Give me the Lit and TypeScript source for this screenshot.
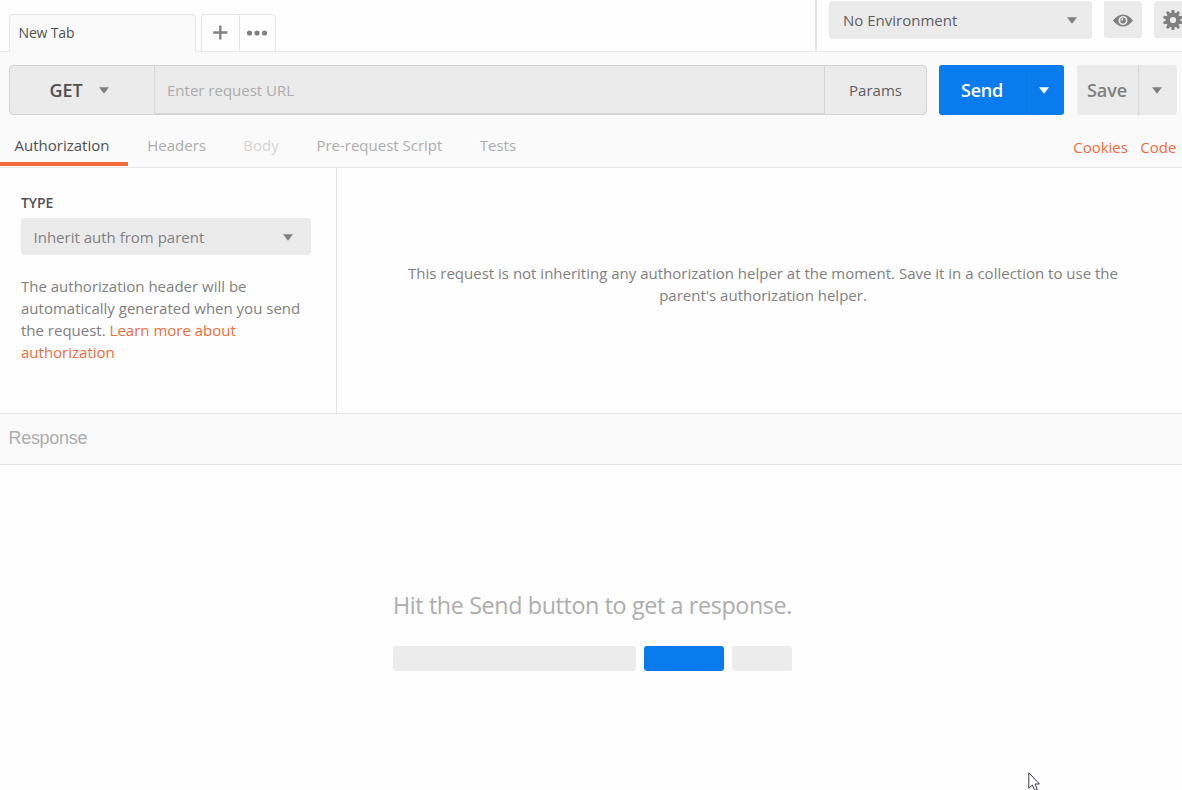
import { LitElement, html, css, svg } from "lit";
import { customElement } from "lit/decorators.js";

const TEETH = Array.from({ length: 10 }, (_, i) => i * 36);

@customElement("app-root")
export class AppRoot extends LitElement {
  static styles = css`
    :host {
      display: flex;
      flex-direction: column;
      position: relative;
      width: 100%;
      height: 790px;
      overflow: hidden;
      background: #fefefe;
      color: #808080;
      font: 15px/22px "Open Sans", sans-serif;
    }
    * { box-sizing: border-box; }
    svg { display: block; flex: none; }
    .t { white-space: nowrap; }
    .header { display: flex; height: 52px; flex: none; border-bottom: 1px solid #e6e6e6; }
    .tabs { display: flex; align-items: flex-end; padding-left: 9px; width: 815px; flex: none; }
    .tab {
      width: 187px; height: 38px; margin-bottom: -1px; padding: 7px 0 0 8.5px;
      border: 1px solid #e6e6e6; border-bottom: 0; border-radius: 4px 4px 0 0;
      background: #fafafa; color: #505050; font-size: 14px; letter-spacing: -0.15px;
    }
    .tabtools {
      display: flex; width: 75px; height: 37px; margin-left: 5px;
      border: 1px solid #e6e6e6; border-bottom: 0; border-radius: 4px 4px 0 0;
    }
    .tabtools > :first-child { border-right: 1px solid #e6e6e6; width: 38px; }
    .env {
      flex: none; display: flex; align-items: flex-start; width: 367px;
      border-left: 2px solid #e6e6e6; padding: 1px 0 0 12px; overflow: hidden;
    }
    .select {
      display: flex; align-items: center; justify-content: space-between;
      background: #ebebeb; border-radius: 3px;
    }
    .envselect { width: 263px; height: 38px; padding: 0 15px 0 14px; color: #606060; flex: none; }
    .square { width: 38px; height: 37px; margin-left: 12px; background: #ebebeb; border-radius: 3px; flex: none; }
    .builder { flex: none; height: 116px; background: #fafafa; border-bottom: 1px solid #e6e6e6; }
    .request { display: flex; padding: 13px 0 0 9px; height: 63px; }
    .bar {
      display: flex; width: 918px; height: 50px; background: #ebebeb;
      border: 1px solid #d4d4d4; border-radius: 4px; flex: none;
    }
    .method {
      display: flex; align-items: center; width: 144px; padding-left: 39.5px; gap: 16px;
      color: #505050; font-size: 18px; font-weight: 600;
    }
    .url {
      display: flex; align-items: center; width: 671px; padding: 1px 0 0 12px; color: #adadad;
      border: 1px solid #d4d4d4; border-width: 0 1px 1px;
    }
    .params { flex: 1; display: flex; align-items: center; justify-content: center; color: #606060; }
    .btn { display: flex; height: 50px; border-radius: 3px; font-size: 18px; font-weight: 600; flex: none; }
    .btn > * { display: flex; align-items: center; justify-content: center; }
    .send { width: 125px; margin-left: 12px; background: #097bed; color: #fff; }
    .send > :first-child { width: 88px; border-right: 1px solid #0878e8; padding-right: 1px; letter-spacing: -0.2px; }
    .send > :last-child { width: 34px; }
    .save { width: 100px; margin-left: 13px; background: #ebebeb; color: #808080; }
    .save > :first-child { width: 62px; border-right: 1px solid #d4d4d4; padding-right: 1px; letter-spacing: -0.1px; }
    .save > :last-child { width: 36px; }
    .subtabs { display: flex; height: 52px; }
    .sub { padding-top: 19px; color: #adadad; height: 51px; }
    .active { width: 128px; padding-left: 14.5px; color: #505050; border-bottom: 4px solid #f26b3a; }
    .off { color: #d4d4d4; }
    .links { margin-left: auto; display: flex; gap: 12.3px; padding: 21px 5.7px 0 0; color: #f26b3a; }
    .panel { display: flex; flex: none; height: 245px; }
    .auth { width: 337px; flex: none; padding: 24px 0 0 21px; border-right: 1px solid #e6e6e6; }
    .label { font-size: 14px; font-weight: 600; color: #505050; letter-spacing: -0.1px; }
    .typeselect { width: 290px; height: 37px; margin-top: 4px; padding: 0 18px 0 12.5px; }
    .typeselect svg { margin-top: 2px; }
    .help { margin-top: 20px; width: 290px; }
    .accent { color: #f26b3a; }
    .note { flex: 1; padding: 94px 0 0 7px; text-align: center; }
    .response {
      flex: none; height: 52px; padding: 14px 0 0 8.5px; background: #fafafa; color: #adadad;
      border: 1px solid #e6e6e6; border-width: 1px 0; font: 18px/20px "Liberation Sans", sans-serif;
      letter-spacing: -0.3px;
    }
    .empty { display: flex; flex-direction: column; align-items: center; padding: 124px 0 0 3px; color: #adadad; }
    .hit { font-size: 23.3px; line-height: 33px; letter-spacing: -0.37px; }
    .blocks { display: flex; gap: 8px; margin-top: 24px; width: 399px; }
    .blocks > * { height: 25px; border-radius: 3px; background: #ececec; }
    .b1 { width: 243px; }
    .blocks > .b2 { width: 80px; background: #097bed; }
    .b3 { width: 60px; }
    .cursor { position: absolute; left: 1028px; top: 772px; }
  `;

  caret(color = "#808080") {
    return html`<svg width="10" height="7" viewBox="0 0 10 7"><path d="M0 .3H10L5 6.8Z" fill=${color} /></svg>`;
  }

  render() {
    return html`
      <div class="header">
        <div class="tabs">
          <div class="tab"><span class="t">New Tab</span></div>
          <div class="tabtools">
            <svg width="38" height="36" viewBox="0 0 38 36">
              <path d="M18.8 10.2V24.8M11.5 17.5H26.1" stroke="#808080" stroke-width="2.4" fill="none" />
            </svg>
            <svg width="35" height="36" viewBox="0 0 35 36" fill="#808080">
              <circle cx="9.5" cy="18" r="2.6" /><circle cx="17" cy="18" r="2.6" /><circle cx="24.5" cy="18" r="2.6" />
            </svg>
          </div>
        </div>
        <div class="env">
          <div class="select envselect"><span class="t">No Environment</span>${this.caret()}</div>
          <div class="square">
            <svg width="38" height="37" viewBox="0 0 38 37">
              <path d="M9 19.5Q13.5 13.5 19 13.5T29 19.5Q24.5 25.5 19 25.5T9 19.5Z" fill="#808080" />
              <circle cx="19" cy="19.5" r="4.5" fill="#ebebeb" />
              <circle cx="19" cy="19.5" r="2.9" fill="#808080" />
              <path d="M19 16.5V19.5H16.2Z" fill="#ebebeb" />
            </svg>
          </div>
          <div class="square">
            <svg width="38" height="37" viewBox="0 0 38 37">
              <g fill="#808080">
                ${TEETH.map((a) => svg`<path d="M17.3 12.5L17.7 8.9H20.3L20.7 12.5Z" transform="rotate(${a} 19 19)" />`)}
              </g>
              <circle cx="19" cy="19" r="5.3" fill="none" stroke="#808080" stroke-width="4.4" />
            </svg>
          </div>
        </div>
      </div>
      <div class="builder">
        <div class="request">
          <div class="bar">
            <div class="method"><span class="t">GET</span>${this.caret()}</div>
            <div class="url"><span class="t">Enter request URL</span></div>
            <div class="params"><span class="t">Params</span></div>
          </div>
          <div class="btn send"><div>Send</div><div>${this.caret("#ffffff")}</div></div>
          <div class="btn save"><div>Save</div><div>${this.caret()}</div></div>
        </div>
        <div class="subtabs">
          <div class="sub active"><span class="t">Authorization</span></div>
          <div class="sub" style="margin-left:19.3px"><span class="t">Headers</span></div>
          <div class="sub off" style="margin-left:37.3px"><span class="t">Body</span></div>
          <div class="sub" style="margin-left:37.7px"><span class="t">Pre-request Script</span></div>
          <div class="sub" style="margin-left:37.4px"><span class="t">Tests</span></div>
          <div class="links"><span>Cookies</span><span>Code</span></div>
        </div>
      </div>
      <div class="panel">
        <div class="auth">
          <div class="label">TYPE</div>
          <div class="select typeselect"><span class="t">Inherit auth from parent</span>${this.caret()}</div>
          <div class="help">
            The authorization header will be<br />automatically generated when you send<br />the request.
            <span class="accent">Learn more about<br />authorization</span>
          </div>
        </div>
        <div class="note">
          This request is not inheriting any authorization helper at the moment. Save it in a collection to use the<br />parent's
          authorization helper.
        </div>
      </div>
      <div class="response">Response</div>
      <div class="empty">
        <div class="t hit">Hit the Send button to get a response.</div>
        <div class="blocks"><div class="b1"></div><div class="b2"></div><div class="b3"></div></div>
      </div>
      <svg class="cursor" width="14" height="20" viewBox="0 0 14 20">
        <path d="M.8 .8V16.3L4.3 13L6.8 18.5L9.3 17.5L7 12H11.5Z" fill="#fff" stroke="#3c3c48" stroke-width="1" />
      </svg>
    `;
  }
}
